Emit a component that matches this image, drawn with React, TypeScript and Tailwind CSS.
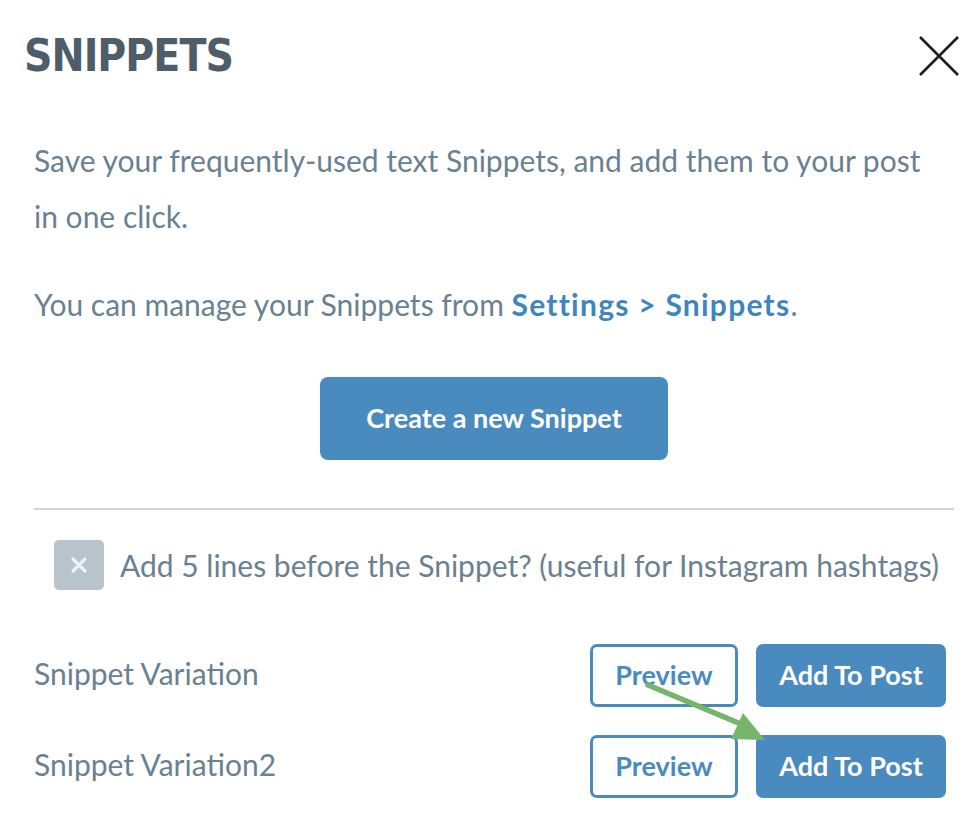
import React from 'react';

const body = { fontFamily: 'Lato, "Noto Sans", sans-serif' };

const Row: React.FC<{ label: string }> = ({ label }) => (
  <div className="flex items-center justify-between pr-2">
    <span className="text-[30px] text-[#6a8191] -mt-[4px]">{label}</span>
    <div className="flex gap-[18px]">
      <button className="w-[148px] h-[63px] rounded-[7px] border-[3px] border-[#4a8bbf] bg-white text-[27px] font-bold text-[#4a8bbf]">
        Preview
      </button>
      <button className="w-[190px] h-[63px] rounded-[7px] bg-[#4a8bbf] text-[27px] font-bold text-white">
        Add To Post
      </button>
    </div>
  </div>
);

export default function App() {
  return (
    <div className="relative w-[978px] h-[814px] bg-white pl-[34px] pr-[24px] overflow-hidden" style={body}>
      {/* Header */}
      <div className="flex items-center justify-between pt-[30px]">
        <h1
          className="text-[44px] leading-[52px] font-bold tracking-[-1px] text-[#4d5d69] -ml-[10px]"
          style={{ fontFamily: '"DejaVu Sans Condensed", "Liberation Sans Narrow", Roboto, sans-serif' }}
        >
          SNIPPETS
        </h1>
        <button className="mr-[-6px]" aria-label="Close">
          <svg width="42" height="42" viewBox="0 0 42 42">
            <path d="M2 2 L40 40 M40 2 L2 40" stroke="#1d1d1d" strokeWidth="2.6" fill="none" />
          </svg>
        </button>
      </div>

      <p className="mt-[50px] w-[900px] text-[30px] leading-[56px] text-[#6a8191]">
        Save your frequently-used text Snippets, and add them to your post in one click.
      </p>
      <p className="mt-[32px] text-[30px] leading-[56px] text-[#6a8191]">
        You can manage your Snippets from{' '}
        <span className="font-bold tracking-[1.25px] text-[#3f86c0]">Settings &gt; Snippets</span>.
      </p>

      <div className="flex justify-center mt-[45px]">
        <button className="w-[348px] h-[83px] rounded-[8px] bg-[#4a8bbf] text-[27px] font-bold text-white">
          Create a new Snippet
        </button>
      </div>

      <div className="mt-[48px] h-[2px] bg-[#d2d2d2]" />

      <div className="flex items-center gap-[16px] mt-[30px] pl-[20px]">
        <div className="w-[50px] h-[50px] rounded-[5px] bg-[#b9c3cb] flex items-center justify-center">
          <svg width="18" height="18" viewBox="0 0 18 18">
            <path d="M3 3 L15 15 M15 3 L3 15" stroke="#eef1f3" strokeWidth="3.2" strokeLinecap="round" />
          </svg>
        </div>
        <span className="text-[30px] text-[#6a8191] whitespace-nowrap">
          Add 5 lines before the Snippet? (useful for Instagram hashtags)
        </span>
      </div>

      <div className="mt-[54px] flex flex-col gap-[28px]">
        <Row label="Snippet Variation" />
        <Row label="Snippet Variation2" />
      </div>

      {/* annotation arrow */}
      <svg className="absolute left-0 top-0 pointer-events-none" width="978" height="814">
        <line x1="648" y1="685" x2="748" y2="727" stroke="#76b66c" strokeWidth="5.5" strokeLinecap="round" />
        <polygon points="765,740 731,739 743,713" fill="#76b66c" />
      </svg>
    </div>
  );
}
